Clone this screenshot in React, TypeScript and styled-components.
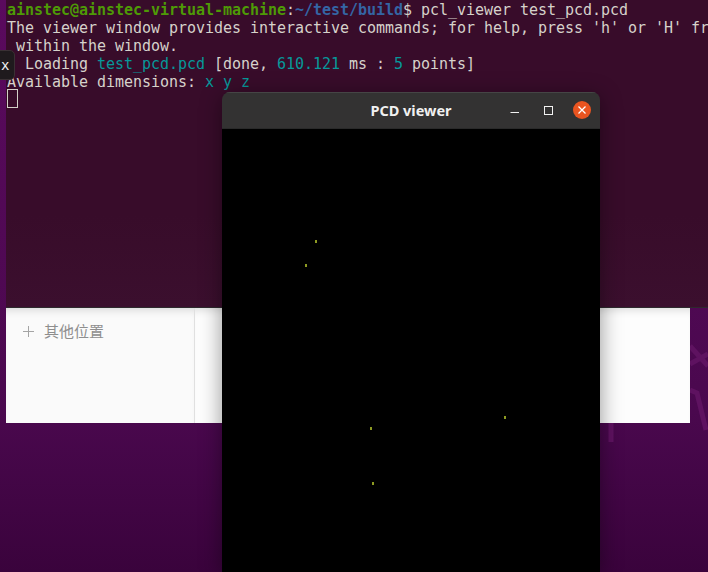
import styled, { createGlobalStyle } from "styled-components";

const points = [
  { x: 315, y: 240 },
  { x: 305, y: 264 },
  { x: 370, y: 427 },
  { x: 504, y: 416 },
  { x: 372, y: 482 },
];

export default function App() {
  return (
    <>
      <GlobalStyle />
      <Desktop>
        <Wallpaper width="708" height="572" viewBox="0 0 708 572">
          <g fill="none" stroke="#5e1260" strokeWidth="5">
            <path d="M690 346 L708 366" />
            <path d="M690 364 L708 354" />
            <path d="M690 390 L697 393 L706 430" />
            <path d="M611 423 L611 442" />
          </g>
        </Wallpaper>

        <Terminal>
          <Line>
            <Prompt>ainstec@ainstec-virtual-machine</Prompt>:<Path>~/test/build</Path>$ pcl_viewer test_pcd.pcd
          </Line>
          <Line>The viewer window provides interactive commands; for help, press 'h' or 'H' from</Line>
          <Line> within the window.</Line>
          <Line>
            {"  Loading "}<Cyan>test_pcd.pcd</Cyan> [done, <Cyan>610.121</Cyan> ms : <Cyan>5</Cyan> points]
          </Line>
          <Line>
            Available dimensions: <Cyan>x y z</Cyan>
          </Line>
          <Cursor />
        </Terminal>

        <Tooltip>x</Tooltip>

        <FilesWindow>
          <Sidebar>
            <PlaceRow>
              <svg width="11" height="11" viewBox="0 0 11 11">
                <path d="M5.5 0V11M0 5.5H11" stroke="#a4a4a4" strokeWidth="1" />
              </svg>
              <PlaceLabel>其他位置</PlaceLabel>
            </PlaceRow>
          </Sidebar>
          <Content />
        </FilesWindow>

        <ViewerWindow>
          <TitleBar>
            <Title>PCD viewer</Title>
            <Controls>
              <ControlButton>
                <svg width="10" height="10" viewBox="0 0 10 10">
                  <path d="M0.5 7.5H9" stroke="#f2f2f2" strokeWidth="1" />
                </svg>
              </ControlButton>
              <ControlButton>
                <svg width="10" height="10" viewBox="0 0 10 10">
                  <rect x="0.5" y="1.5" width="8" height="8" fill="none" stroke="#f2f2f2" strokeWidth="1" />
                </svg>
              </ControlButton>
              <CloseButton>
                <svg width="10" height="10" viewBox="0 0 10 10">
                  <path d="M1.5 1.5L8.5 8.5M8.5 1.5L1.5 8.5" stroke="#fff" strokeWidth="1.3" />
                </svg>
              </CloseButton>
            </Controls>
          </TitleBar>
          <Cloud>
            {points.map((p) => (
              <Point key={`${p.x}-${p.y}`} $x={p.x - 222} $y={p.y - 129} />
            ))}
          </Cloud>
        </ViewerWindow>
      </Desktop>
    </>
  );
}

const GlobalStyle = createGlobalStyle`
  html, body {
    margin: 0;
    padding: 0;
    background: #3c0540;
  }
`;

const Desktop = styled.div`
  position: relative;
  width: 708px;
  height: 572px;
  overflow: hidden;
  background: linear-gradient(180deg, #5a0a5e 0%, #4a084e 72%, #3a033c 100%);
`;

const Wallpaper = styled.svg`
  position: absolute;
  left: 0;
  top: 0;
`;

const Terminal = styled.div`
  position: absolute;
  left: 6px;
  top: 0;
  width: 702px;
  height: 308px;
  box-sizing: border-box;
  padding: 1px 0 0 1px;
  overflow: hidden;
  background: linear-gradient(180deg, #380c2a 0%, #380c2a 70%, #3b0f2e 100%);
  border-bottom: 1px solid #2e2a2e;
  color: #d6d2cb;
  font-family: "DejaVu Sans Mono", monospace;
  font-size: 15px;
  letter-spacing: -0.03px;
  line-height: 18px;
`;

const Line = styled.div`
  white-space: pre;
`;

const Prompt = styled.span`
  color: #4e9a06;
  font-weight: 700;
`;

const Path = styled.span`
  color: #3465a4;
  font-weight: 700;
`;

const Cyan = styled.span`
  color: #06989a;
`;

const Cursor = styled.div`
  box-sizing: border-box;
  width: 11px;
  height: 19px;
  margin-top: -2px;
  border: 1px solid #d3d0c8;
`;

const Tooltip = styled.div`
  position: absolute;
  left: -8px;
  top: 50px;
  width: 23px;
  height: 30px;
  box-sizing: border-box;
  padding-left: 8px;
  border-radius: 5px;
  border: 1px solid #3a3034;
  background: #1f1a1d;
  color: #f2f2f2;
  font-family: "DejaVu Sans Mono", monospace;
  font-size: 14px;
  line-height: 28px;
`;

const FilesWindow = styled.div`
  position: absolute;
  left: 6px;
  top: 308px;
  width: 684px;
  height: 115px;
  display: flex;
  background: #fdfdfd;
`;

const Sidebar = styled.div`
  width: 189px;
  box-sizing: border-box;
  padding: 14px 0 0 17px;
  border-right: 1px solid #e0e0e0;
  background: #fafafa;
  box-shadow: inset 0 8px 8px -6px rgba(0, 0, 0, 0.14);
`;

const PlaceRow = styled.div`
  display: flex;
  align-items: center;
  gap: 10px;
`;

const PlaceLabel = styled.span`
  color: #8e8e8e;
  font-family: "Noto Sans CJK SC", sans-serif;
  font-size: 15px;
  line-height: 18px;
`;

const Content = styled.div`
  flex: 1;
  box-shadow: inset 0 8px 8px -6px rgba(0, 0, 0, 0.14);
`;

const ViewerWindow = styled.div`
  position: absolute;
  left: 222px;
  top: 92px;
  width: 378px;
  height: 480px;
  display: flex;
  flex-direction: column;
  border-radius: 8px 8px 0 0;
  overflow: hidden;
  box-shadow: 0 4px 22px rgba(0, 0, 0, 0.42);
`;

const TitleBar = styled.div`
  position: relative;
  flex: none;
  height: 37px;
  box-sizing: border-box;
  padding: 0 0 2px;
  display: flex;
  align-items: center;
  justify-content: center;
  background: #333232;
  border-top: 1px solid #454545;
  border-bottom: 1px solid #2a2a2a;
`;

const Title = styled.span`
  color: #f0f0f0;
  font-family: "Noto Sans", sans-serif;
  font-size: 14.5px;
  font-weight: 700;
`;

const Controls = styled.div`
  position: absolute;
  right: 9px;
  top: 8px;
  display: flex;
  align-items: center;
  gap: 15px;
`;

const ControlButton = styled.div`
  width: 19px;
  height: 18px;
  display: flex;
  align-items: center;
  justify-content: center;
`;

const CloseButton = styled(ControlButton)`
  width: 18px;
  border-radius: 50%;
  background: #e95420;
`;

const Cloud = styled.div`
  position: relative;
  flex: 1;
  background: #000;
`;

const Point = styled.i<{ $x: number; $y: number }>`
  position: absolute;
  left: ${(p) => p.$x}px;
  top: ${(p) => p.$y}px;
  width: 2px;
  height: 3px;
  background: #8d9a22;
`;
